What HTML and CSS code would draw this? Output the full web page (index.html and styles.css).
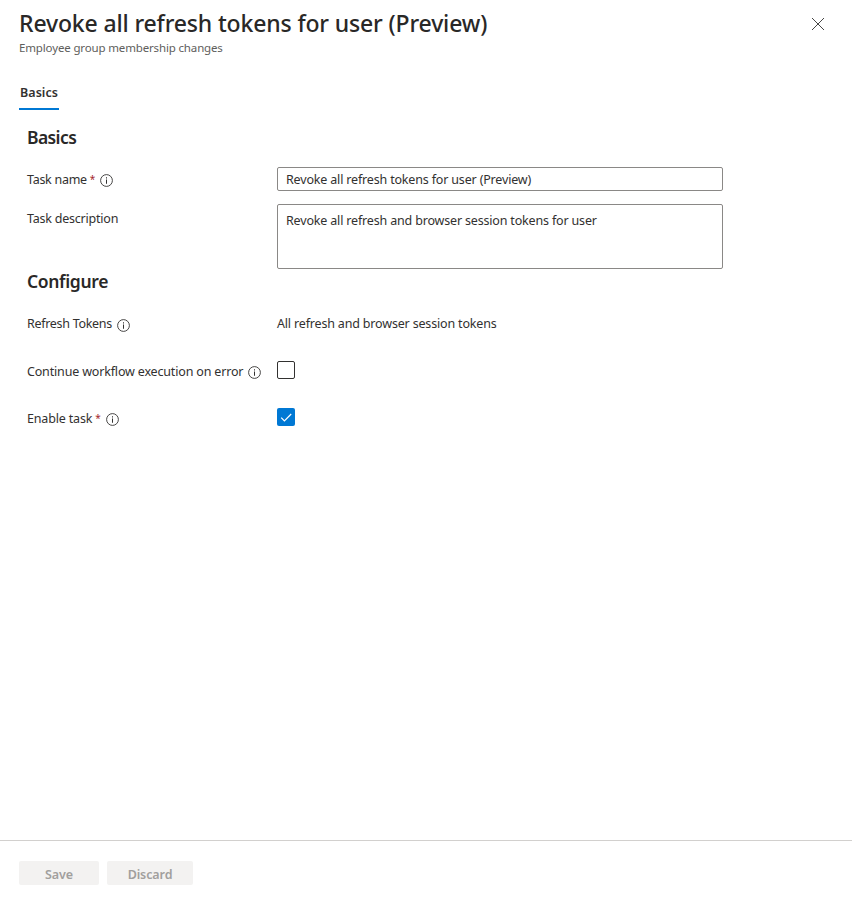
FILE: index.html
```html
<!DOCTYPE html>
<html lang="en">
<head>
<meta charset="utf-8">
<title>Revoke all refresh tokens for user (Preview)</title>
<link rel="stylesheet" href="styles.css">
</head>
<body>
<svg class="defs" width="0" height="0">
  <symbol id="info" viewBox="0 0 13 13">
    <circle cx="6.5" cy="6.5" r="5.9" fill="none" stroke="currentColor" stroke-width="0.9"/>
    <path d="M6 5.5h1v4.2H6zM6 3.2h1v1.2H6z" fill="currentColor"/>
  </symbol>
</svg>
<div class="panel">
  <header class="header">
    <div>
      <h1 class="title">Revoke all refresh tokens for user (Preview)</h1>
      <p class="subtitle">Employee group membership changes</p>
    </div>
    <button class="close" aria-label="Close">
      <svg width="12" height="12" viewBox="0 0 12 12"><path d="M0 0l12 12M12 0L0 12" stroke="#323130" stroke-width="0.9"/></svg>
    </button>
  </header>
  <nav class="tabs"><a class="tab">Basics</a></nav>
  <main class="content">
    <h2 class="section">Basics</h2>
    <div class="row row-name">
      <label class="label" for="name">Task name<span class="req">*</span><svg class="info"><use href="#info"/></svg></label>
      <input class="field" id="name" type="text" value="Revoke all refresh tokens for user (Preview)">
    </div>
    <div class="row row-description">
      <label class="label" for="description">Task description</label>
      <textarea class="field area" id="description">Revoke all refresh and browser session tokens for user</textarea>
    </div>
    <h2 class="section section-configure">Configure</h2>
    <div class="row row-tokens">
      <div class="label">Refresh Tokens<svg class="info"><use href="#info"/></svg></div>
      <div class="value">All refresh and browser session tokens</div>
    </div>
    <div class="row row-check">
      <div class="label">Continue workflow execution on error<svg class="info"><use href="#info"/></svg></div>
      <span class="check" role="checkbox" aria-checked="false"></span>
    </div>
    <div class="row row-check">
      <div class="label">Enable task<span class="req">*</span><svg class="info"><use href="#info"/></svg></div>
      <span class="check checked" role="checkbox" aria-checked="true"><svg width="18" height="18" viewBox="0 0 18 18"><path d="M4.2 9.6l3.2 3.2 6.8-6.8" fill="none" stroke="#fff" stroke-width="1.2"/></svg></span>
    </div>
  </main>
  <footer class="footer">
    <button class="btn btn-save" disabled>Save</button>
    <button class="btn btn-discard" disabled>Discard</button>
  </footer>
</div>
</body>
</html>
```
FILE: styles.css
```css
* { box-sizing: border-box; }
body {
  margin: 0;
  background: #fff;
  color: #323130;
  font: 400 12.5px/22px "Noto Sans", "Open Sans", sans-serif;
  letter-spacing: -0.17px;
}
h1, h2, p { margin: 0; }
button, input, textarea { font: inherit; letter-spacing: inherit; color: inherit; }
.defs { display: block; }
.panel { display: flex; flex-direction: column; height: 904px; }
.header { display: flex; justify-content: space-between; height: 82px; padding: 7px 28px 0 19px; }
.title { font-size: 23px; line-height: 32px; font-weight: 500; letter-spacing: -0.15px; color: #292827; }
.subtitle { margin-top: 1px; font-size: 11.5px; line-height: 16px; letter-spacing: -0.15px; color: #605e5c; }
.close { display: flex; width: 12px; height: 12px; margin-top: 11px; padding: 0; border: 0; background: none; }
.tabs { display: flex; padding-left: 19px; }
.tab { height: 28px; padding: 0 1px; border-bottom: 2px solid #0078d4; font-weight: 600; letter-spacing: 0.05px; }
.content { flex: 1; padding: 15px 0 0 27px; }
.section { font-size: 17.5px; line-height: 24px; font-weight: 600; letter-spacing: -0.6px; color: #292827; }
.section-configure { letter-spacing: -0.35px; }
.row { display: flex; align-items: flex-start; }
.row-name { margin-top: 18px; }
.row-description { margin-top: 13px; }
.row-tokens { margin-top: 20px; height: 48px; }
.row-check { height: 47px; }
.label { display: flex; align-items: center; width: 250px; height: 22px; }
.row-name .label { margin-top: 2px; letter-spacing: -0.28px; }
.row-description .label { margin-top: 4px; letter-spacing: -0.22px; }
.row-tokens .label { letter-spacing: -0.3px; }
.req { margin-left: 3px; color: #a4262c; font-size: 10px; line-height: 20px; padding-bottom: 2px; }
.info { width: 13px; height: 13px; margin: 1px 0 0 5px; }
.row-tokens .info { margin-top: 3px; }
.field { width: 446px; height: 24px; padding: 0 8px; border: 1px solid #8a8886; border-radius: 2px; background: #fff; outline: 0; }
.area { height: 65px; padding-top: 5px; resize: none; overflow: hidden; }
.check { width: 18px; height: 18px; border: 1px solid #323130; border-radius: 2px; }
.checked { border: 0; background: #0078d4; }
.checked svg { display: block; }
.footer { display: flex; gap: 8px; height: 64px; padding: 20px 19px 0; border-top: 1px solid #d2d0ce; }
.btn { height: 24px; padding: 3px 0 0; border: 0; border-radius: 2px; background: #f3f2f1; color: #a19f9d; font-weight: 600; line-height: 20px; letter-spacing: -0.1px; }
.btn-save { width: 80px; }
.btn-discard { width: 86px; }
```
